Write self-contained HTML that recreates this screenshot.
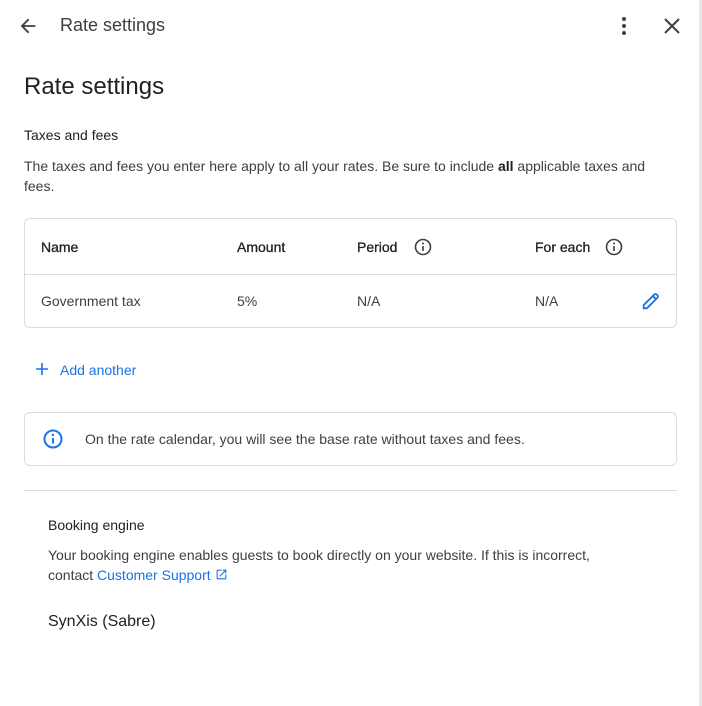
<!DOCTYPE html>
<html><head><style>
body{margin:0;width:702px;height:706px;background:#fff;font-family:"Liberation Sans",Arial,sans-serif;color:#202124;position:relative;overflow:hidden}
.a{position:absolute;white-space:nowrap}
.rb{position:absolute;left:699px;top:0;width:3px;height:706px;background:#e8e8e8}
.box{position:absolute;border:1px solid #dadce0;border-radius:6px;box-sizing:border-box}
.s{font-size:14px;color:#3c4043}
.h{font-size:14px;color:#202124;-webkit-text-stroke:0.3px #202124}
</style></head><body>
<div class="rb"></div>
<svg class="a" style="left:17px;top:15px" width="22" height="22" viewBox="0 0 24 24"><path d="M20 11H7.8l5.6-5.6L12 4l-8 8 8 8 1.4-1.4L7.8 13H20z" fill="#3c4043"/></svg>
<div class="a" style="left:60px;top:15px;font-size:18px;color:#3c4043">Rate settings</div>
<svg class="a" style="left:612px;top:14px" width="24" height="24" viewBox="0 0 24 24"><circle cx="12" cy="5" r="2" fill="#3c4043"/><circle cx="12" cy="12" r="2" fill="#3c4043"/><circle cx="12" cy="19" r="2" fill="#3c4043"/></svg>
<svg class="a" style="left:660px;top:14px" width="24" height="24" viewBox="0 0 24 24"><path d="M5 5L19 19M19 5L5 19" stroke="#3c4043" stroke-width="2"/></svg>
<div class="a" style="left:24px;top:73px;font-size:24px;color:#202124">Rate settings</div>
<div class="a" style="left:24px;top:127px;font-size:14px;color:#202124">Taxes and fees</div>
<div class="a s" style="left:24px;top:156px;line-height:20px;white-space:normal;width:650px">The taxes and fees you enter here apply to all your rates. Be sure to include <b style="color:#202124">all</b> applicable taxes and fees.</div>
<div class="box" style="left:24px;top:218px;width:653px;height:110px"></div>
<div class="a" style="left:25px;top:274px;width:651px;height:1px;background:#dadce0"></div>
<div class="a h" style="left:41px;top:239px">Name</div>
<div class="a h" style="left:237px;top:239px">Amount</div>
<div class="a h" style="left:357px;top:239px">Period</div>
<div class="a h" style="left:535px;top:239px">For each</div>
<svg class="a" style="left:413px;top:237px" width="20" height="20" viewBox="0 0 20 20"><circle cx="10" cy="10" r="7.5" fill="none" stroke="#3c4043" stroke-width="1.6"/><path d="M10 9v5" stroke="#3c4043" stroke-width="1.6"/><circle cx="10" cy="6.5" r="1" fill="#3c4043"/></svg>
<svg class="a" style="left:604px;top:237px" width="20" height="20" viewBox="0 0 20 20"><circle cx="10" cy="10" r="7.5" fill="none" stroke="#3c4043" stroke-width="1.6"/><path d="M10 9v5" stroke="#3c4043" stroke-width="1.6"/><circle cx="10" cy="6.5" r="1" fill="#3c4043"/></svg>
<div class="a s" style="left:41px;top:293px">Government tax</div>
<div class="a s" style="left:237px;top:293px">5%</div>
<div class="a s" style="left:357px;top:293px">N/A</div>
<div class="a s" style="left:535px;top:293px">N/A</div>
<svg class="a" style="left:640px;top:290px" width="22" height="22" viewBox="0 0 24 24"><path d="M4 20v-3.5L15.5 5a2 2 0 012.8 0l.7.7a2 2 0 010 2.8L7.5 20z" fill="none" stroke="#1a73e8" stroke-width="2"/><path d="M14 6.5l3.5 3.5" stroke="#1a73e8" stroke-width="2"/></svg>
<svg class="a" style="left:35px;top:362px" width="14" height="14" viewBox="0 0 14 14"><path d="M7 1v12M1 7h12" stroke="#1a73e8" stroke-width="1.6"/></svg>
<div class="a" style="left:60px;top:362px;font-size:14px;color:#1a73e8">Add another</div>
<div class="box" style="left:24px;top:412px;width:653px;height:54px"></div>
<svg class="a" style="left:42px;top:428px" width="22" height="22" viewBox="0 0 22 22"><circle cx="11" cy="11" r="8.5" fill="none" stroke="#1a73e8" stroke-width="2"/><path d="M11 10v5.5" stroke="#1a73e8" stroke-width="2"/><circle cx="11" cy="7" r="1.2" fill="#1a73e8"/></svg>
<div class="a s" style="left:85px;top:431px">On the rate calendar, you will see the base rate without taxes and fees.</div>
<div class="a" style="left:24px;top:490px;width:653px;height:1px;background:#dadce0"></div>
<div class="a" style="left:48px;top:517px;font-size:14px;color:#202124">Booking engine</div>
<div class="a s" style="left:48px;top:545px;line-height:20px;white-space:normal;width:600px">Your booking engine enables guests to book directly on your website. If this is incorrect,<br>contact <span style="color:#1a73e8">Customer Support</span> <svg width="13" height="13" viewBox="0 0 24 24" style="vertical-align:-1px"><path d="M19 19H5V5h7V3H5a2 2 0 00-2 2v14a2 2 0 002 2h14a2 2 0 002-2v-7h-2zM14 3v2h3.6l-9.8 9.8 1.4 1.4L19 6.4V10h2V3z" fill="#1a73e8"/></svg></div>
<div class="a" style="left:48px;top:613px;font-size:16px;color:#202124">SynXis (Sabre)</div>
</body></html>
